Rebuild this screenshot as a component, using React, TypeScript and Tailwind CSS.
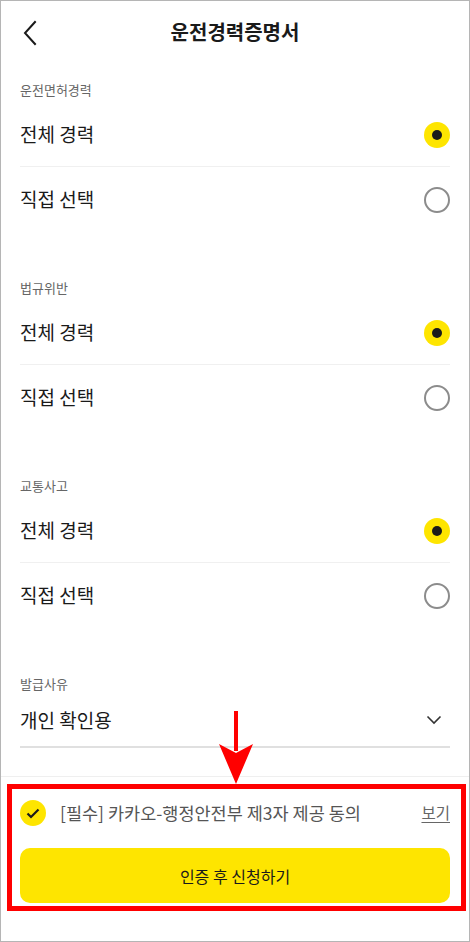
import React from "react";

const font = { fontFamily: '"Noto Sans CJK KR", "Noto Sans", sans-serif' };

function Radio({ checked }: { checked: boolean }) {
  return checked ? (
    <div className="w-[26px] h-[26px] rounded-full bg-[#fee500] flex items-center justify-center">
      <div className="w-[10px] h-[10px] rounded-full bg-[#1a1a1a]" />
    </div>
  ) : (
    <div className="w-[26px] h-[26px] rounded-full border-2 border-[#8c8c8c] bg-white" />
  );
}

function Section({ label, first }: { label: string; first?: boolean }) {
  return (
    <div className={first ? "mt-[18px]" : "mt-[46px]"}>
      <div className="h-[21px] leading-[20px] text-[13px] text-[#666]">{label}</div>
      <div className="h-[66px] pt-[2px] flex items-center justify-between border-b border-[#f0f0f0]">
        <span className="text-[19px] text-[#1a1a1a]">전체 경력</span>
        <Radio checked />
      </div>
      <div className="h-[65px] flex items-center justify-between">
        <span className="text-[19px] text-[#1a1a1a]">직접 선택</span>
        <Radio checked={false} />
      </div>
    </div>
  );
}

export default function App() {
  return (
    <div
      style={font}
      className="relative w-[470px] h-[942px] bg-white border border-[#b5b5b5] overflow-hidden"
    >
      {/* Header */}
      <div className="relative h-[61px] flex items-center justify-center">
        <svg
          className="absolute left-[21px] top-[19px]"
          width="16"
          height="26"
          viewBox="0 0 16 26"
          fill="none"
        >
          <path d="M13 2 L3 13 L13 24" stroke="#1a1a1a" strokeWidth="2" strokeLinecap="square" />
        </svg>
        <h1 className="text-[20px] font-bold text-[#1a1a1a] mt-[1px]">운전경력증명서</h1>
      </div>

      <div className="px-[19px]">
        <Section label="운전면허경력" first />
        <Section label="법규위반" />
        <Section label="교통사고" />

        <div className="mt-[46px]">
          <div className="h-[21px] leading-[20px] text-[13px] text-[#666]">발급사유</div>
          <div className="h-[53px] flex items-center justify-between border-b-2 border-[#e0e0e0]">
            <span className="text-[19px] text-[#1a1a1a] mt-[-1px]">개인 확인용</span>
            <svg width="16" height="10" viewBox="0 0 16 10" fill="none" className="mr-[8px] mt-[-2px]">
              <path d="M1.5 1.5 L8 8 L14.5 1.5" stroke="#333" strokeWidth="1.6" />
            </svg>
          </div>
        </div>
      </div>

      {/* Bottom panel */}
      <div className="mt-[28px] border-t border-[#efefef] px-[19px] pt-[22px]">
        <div className="h-[28px] flex items-center">
          <div className="w-[26px] h-[26px] rounded-full bg-[#fee500] flex items-center justify-center">
            <svg width="14" height="11" viewBox="0 0 14 11" fill="none">
              <path d="M1.5 5.5 L5 9 L12.5 1.5" stroke="#1a1a1a" strokeWidth="2.2" />
            </svg>
          </div>
          <span className="ml-[14px] text-[17.5px] text-[#555] flex-1 whitespace-nowrap">[필수] 카카오-행정안전부 제3자 제공 동의</span>
          <span className="text-[15.5px] text-[#666] underline underline-offset-[3px]">보기</span>
        </div>
        <button className="mt-[21px] w-full h-[55px] rounded-[10px] bg-[#fee500] text-[16px] text-[#1a1a1a] flex items-center justify-center">
          인증 후 신청하기
        </button>
      </div>

      {/* Annotation: red box */}
      <div className="absolute left-[6px] top-[783px] w-[459px] h-[127px] border-[5px] border-[#ff0000] pointer-events-none" />

      {/* Annotation: red arrow */}
      <svg
        className="absolute left-[216px] top-[710px] pointer-events-none"
        width="38"
        height="74"
        viewBox="0 0 38 74"
      >
        <rect x="17" y="0" width="4" height="40" fill="#f00" />
        <path d="M19 73 L2 33 L19 42 L36 33 Z" fill="#f00" />
      </svg>
    </div>
  );
}
